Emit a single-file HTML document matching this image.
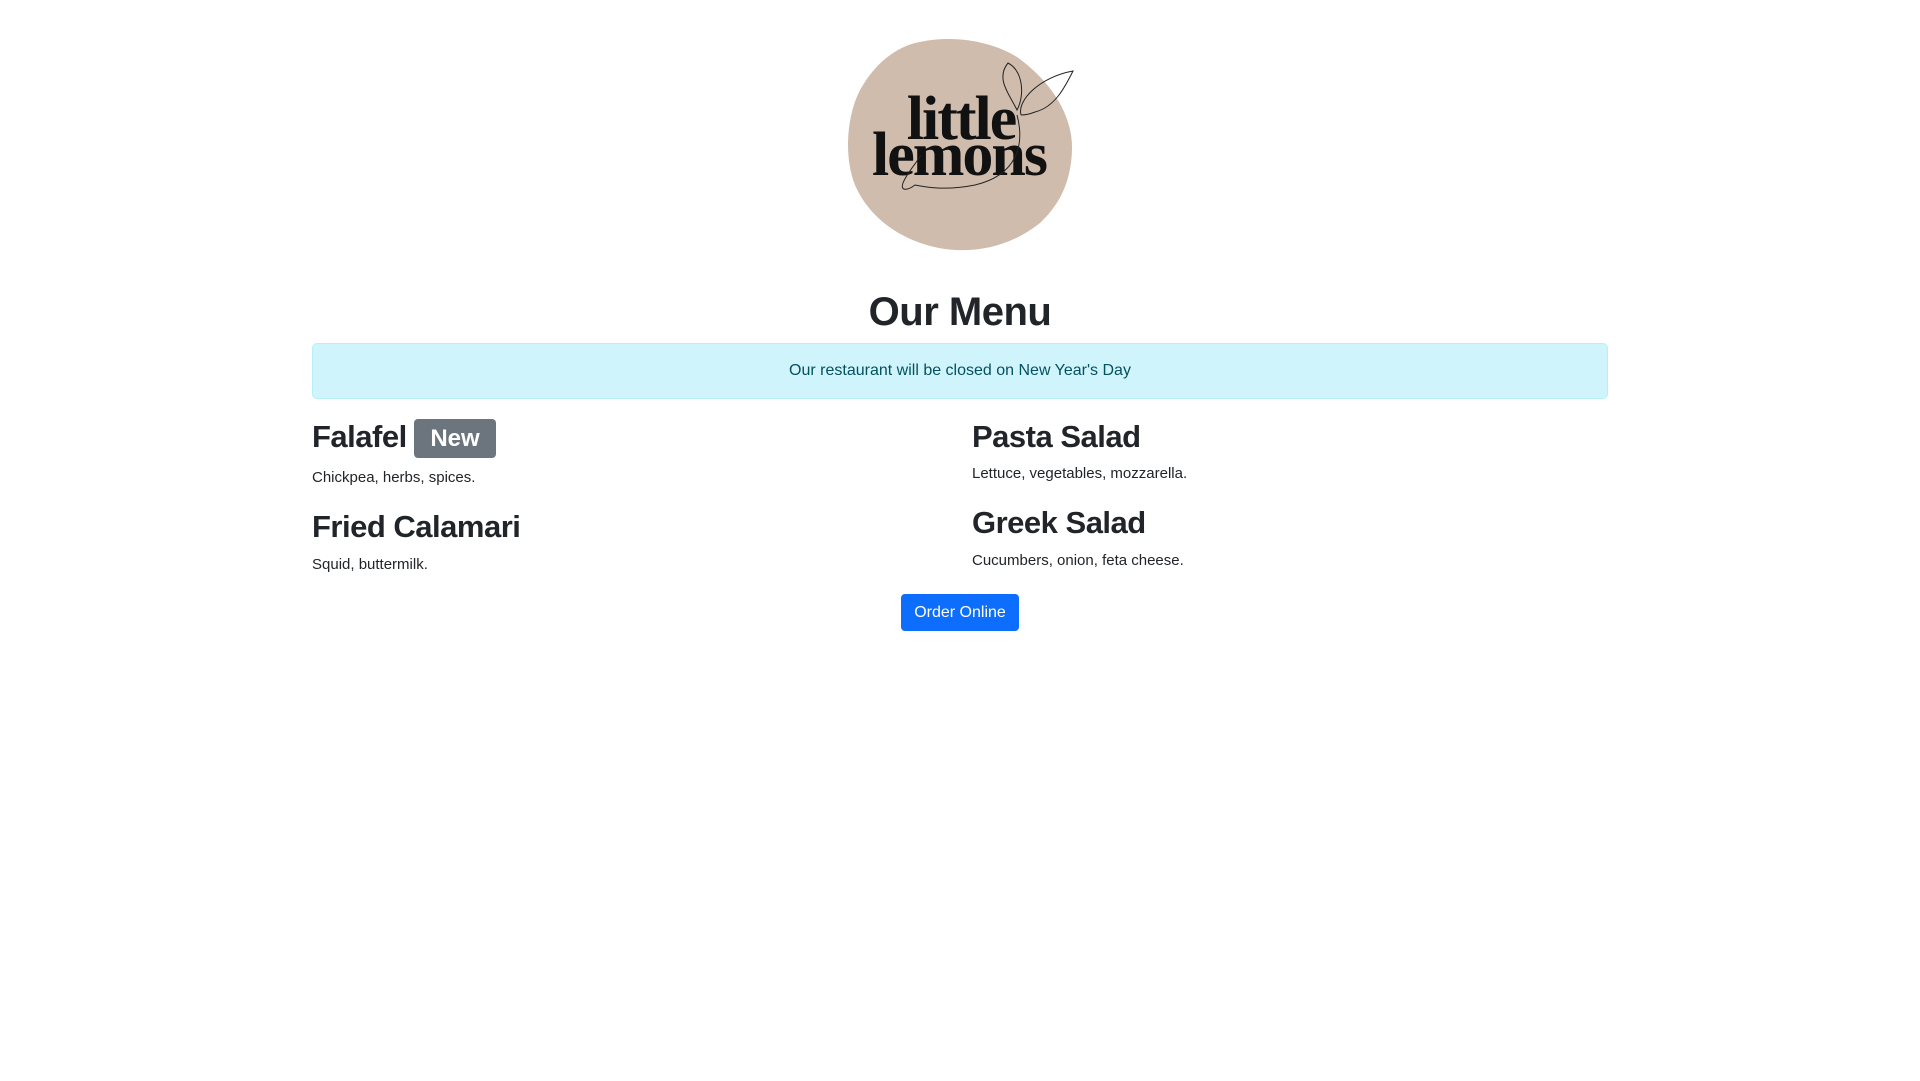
<!DOCTYPE html>
<html><head><meta charset="utf-8"><style>
*{margin:0;padding:0;box-sizing:border-box}
body{width:1920px;height:1081px;background:#fff;font-family:"Liberation Sans",sans-serif;color:#212529;position:relative;overflow:hidden}
.a{position:absolute;white-space:nowrap;line-height:1}
h1{font-size:40px;font-weight:700;letter-spacing:-0.5px}
h2{font-size:31px;font-weight:700;letter-spacing:-0.5px}
p{font-size:15px}
</style></head><body>
<svg class="a" style="left:845px;top:35px" width="235" height="220" viewBox="0 0 235 220">
<path d="M70 8 C110 -2 150 8 172 22 C200 42 228 75 227 115 C226 150 212 172 195 188 C165 212 130 218 100 214 C60 208 25 185 10 150 C-2 120 2 75 18 50 C30 30 48 14 70 8Z" fill="#cfbcad"/>
<text x="116" y="104" text-anchor="middle" font-family="Liberation Serif,serif" font-size="62" font-weight="700" fill="#111" letter-spacing="-2">little</text>
<text x="114" y="140" text-anchor="middle" font-family="Liberation Serif,serif" font-size="62" font-weight="700" fill="#111" letter-spacing="-2">lemons</text>
<path d="M163 28 C150 44 165 60 172 75 C180 60 178 36 163 28Z M176 80 C172 65 195 42 228 36 C220 52 210 72 190 77 C185 79 180 80 176 80" fill="none" stroke="#222" stroke-width="1"/>
<path d="M172 80 C180 110 172 140 130 150 C100 156 80 152 70 150 C62 156 55 156 58 148 C62 138 70 130 76 120" fill="none" stroke="#222" stroke-width="1"/>
</svg>
<h1 class="a" style="left:0;width:1920px;text-align:center;top:292px">Our Menu</h1>
<div class="a" style="left:312px;top:343px;width:1296px;height:56px;background:#cff4fc;border:1px solid #b6effb;border-radius:5px;color:#055160;font-size:16px;text-align:center;line-height:54px">Our restaurant will be closed on New Year's Day</div>
<h2 class="a" style="left:312px;top:421px">Falafel</h2>
<div class="a" style="left:414px;top:419px;width:82px;height:39px;background:#6c757d;color:#fff;border-radius:4px;font-weight:700;font-size:24px;text-align:center;line-height:39px">New</div>
<p class="a" style="left:312px;top:470px">Chickpea, herbs, spices.</p>
<h2 class="a" style="left:312px;top:511px">Fried Calamari</h2>
<p class="a" style="left:312px;top:557px">Squid, buttermilk.</p>
<h2 class="a" style="left:972px;top:421px">Pasta Salad</h2>
<p class="a" style="left:972px;top:466px">Lettuce, vegetables, mozzarella.</p>
<h2 class="a" style="left:972px;top:507px">Greek Salad</h2>
<p class="a" style="left:972px;top:553px">Cucumbers, onion, feta cheese.</p>
<div class="a" style="left:901px;top:594px;width:118px;height:37px;background:#0d6efd;color:#fff;border-radius:4px;font-size:16px;text-align:center;line-height:37px">Order Online</div>
</body></html>
